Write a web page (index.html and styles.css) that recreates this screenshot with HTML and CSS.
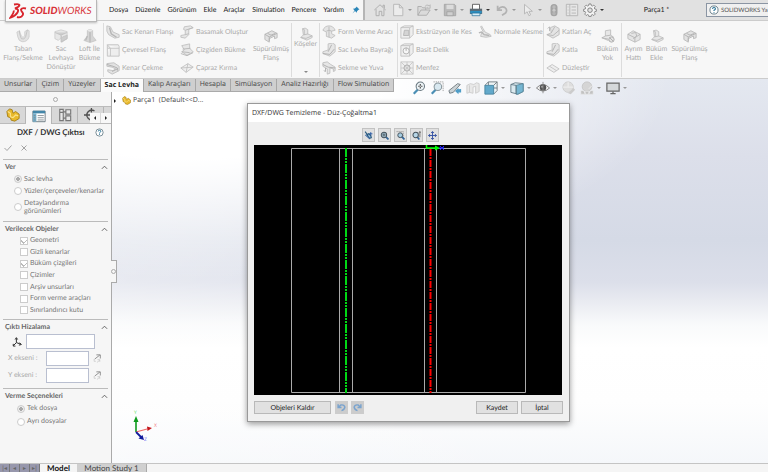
FILE: index.html
```
<!DOCTYPE html>
<html lang="tr">
<head>
<meta charset="utf-8">
<title>SOLIDWORKS - Parça1</title>
<link rel="stylesheet" href="styles.css">
</head>
<body>
<svg class="sprite" aria-hidden="true">
  <symbol id="i-home" viewBox="0 0 16 16"><path d="M1.500 8 8 2l6.500 6M3.500 7v7.500h3.500V9.500h3v5h2.500V7M11.500 4.500V2.500h1.500V6" fill="none" stroke="#a9a9a9"/></symbol>
  <symbol id="i-new" viewBox="0 0 16 16"><path d="M3 1.500h6.500l4 4v9H3zM9.500 1.500v4h4" fill="#ececec" stroke="#b5b5b5"/></symbol>
  <symbol id="i-open" viewBox="0 0 16 16"><path d="M1 14V4h4l1.500 1.500H10V8M1 14l3.500-6H15l-4 6z" fill="#dadada" stroke="#aaa"/><path d="M9 4q2-3 5-1l1-1v4h-4l1-1.500" fill="#ddd" stroke="#aaa" stroke-width=".8"/></symbol>
  <symbol id="i-save" viewBox="0 0 16 16"><path d="M1.500 1.500h11.500l1.500 1.500v11.500h-13z" fill="#b9b9b9" stroke="#a5a5a5"/><path d="M4 2h8v5H4z" fill="#dcdcdc"/><path d="M4.500 10h7v4.500h-7z" fill="#cfcfcf" stroke="#999" stroke-width=".7"/></symbol>
  <symbol id="i-print" viewBox="0 0 16 16"><path d="M4 7V1.500h8V7" fill="#fff" stroke="#555"/><path d="M1 6.500h14v6H1z" fill="#5e6a72"/><path d="M1.500 9h13v3h-13z" fill="#2d8fc0"/><path d="M3.500 11.500h9v3h-9z" fill="#d8eef8" stroke="#246d96" stroke-width=".8"/></symbol>
  <symbol id="i-undo" viewBox="0 0 16 16"><path d="M3 3v5h5M3.500 7.500Q7 3 11 5q4 3 1 6.500L8 14" fill="none" stroke="#b2b2b2" stroke-width="2"/></symbol>
  <symbol id="i-pointer" viewBox="0 0 16 16"><path d="M4 1.500v11l3-2.500 2 4.500 2-1-2-4h4z" fill="#ececec" stroke="#b3b3b3"/></symbol>
  <symbol id="i-traffic" viewBox="0 0 16 16"><rect x="4" y="1" width="8" height="14" rx="4" fill="#a3a3a3"/><circle cx="8" cy="4.500" r="2" fill="#bbb"/><circle cx="8" cy="8.200" r="1.800" fill="#c9c9c9"/><circle cx="8" cy="12" r="2" fill="#b5b5b5"/></symbol>
  <symbol id="i-list" viewBox="0 0 16 16"><path d="M1.500 1.500h13v13h-13zM5.500 1.500v13M7.500 4.500h5M7.500 8h5M7.500 11.500h5M3 4.500h1M3 8h1M3 11.500h1" fill="#e6e6e6" stroke="#b2b2b2"/></symbol>
  <symbol id="i-gear" viewBox="0 0 16 16"><path d="M6.700 1h2.600l.4 2 1.300.6 1.800-1.200 1.800 1.900-1.200 1.700.6 1.300 2 .4v2.500l-2 .4-.6 1.300 1.200 1.800-1.800 1.800-1.800-1.200-1.300.6-.4 2H6.700l-.4-2L5 14.300l-1.800 1.200-1.800-1.800 1.200-1.800L2 10.600l-2-.4V7.700l2-.4.6-1.300-1.200-1.700 1.800-1.900L5 3.600 6.300 3z" fill="#f4f4f4" stroke="#777" transform="translate(.7 .2) scale(.91)"/><circle cx="8" cy="8.200" r="2.600" fill="#e2e2e2" stroke="#777"/></symbol>
  <symbol id="i-help" viewBox="0 0 16 16"><circle cx="8" cy="8" r="6.500" fill="#fff" stroke="#5b7480" stroke-width="1.400"/><path d="M5.700 6.200q0-2.200 2.300-2.200t2.300 2q0 1.500-2.300 2.500v1.200M8 11v1.500" fill="none" stroke="#277296" stroke-width="1.700"/></symbol>
  <symbol id="i-pin" viewBox="0 0 16 16"><path d="M9 1l6 6-2 .5-3 3-.5 3L6 10 1 15l4-6-3-3.500L5.500 5l3-2.500z" fill="#2a86b8"/></symbol>

  <symbol id="r-base" viewBox="0 0 16 16"><path d="M1 3.500 4 2l2 6q2 3 4 0V3l3-2 2 1v7q-2 6-8 5.500Q3 14 2 9z" fill="#dedede" stroke="#bbb" stroke-width=".8"/><path d="M4 2v3l2 6q3 2 5-2l2-8" fill="none" stroke="#aaa" stroke-width=".8"/></symbol>
  <symbol id="r-convert" viewBox="0 0 16 16"><path d="M1 3 8 1l7 2v8l-6 4-1-5-3 3-4-2z" fill="#e4e4e4" stroke="#bbb" stroke-width=".8"/><path d="M1 4l7 3 7-3M8 7v8l7-4V7l-5 2" fill="#c4c4c4" stroke="#b0b0b0" stroke-width=".8"/></symbol>
  <symbol id="r-loft" viewBox="0 0 16 16"><path d="M5 2q3-2 6 0v6l4 5-7 2.500L1 13l4-5z" fill="#cdcdcd" stroke="#b5b5b5" stroke-width=".8"/><path d="M8 3v12M5 8l-2 5" stroke="#aaa" fill="none" stroke-width="1.500"/><ellipse cx="8" cy="2" rx="3" ry="1.300" fill="#eee" stroke="#bbb" stroke-width=".6"/></symbol>
  <symbol id="r-edge" viewBox="0 0 16 16"><path d="M1 1l4 1 3 6 7 3v3l-5 1-7-4-2-4z" fill="#e0e0e0" stroke="#b4b4b4"/><path d="M4 3l2 7 6 4" fill="none" stroke="#a5a5a5" stroke-width="1.600"/></symbol>
  <symbol id="r-miter" viewBox="0 0 16 16"><path d="M1.500 2h12.500l1 2v11H5V6H1.500zM1.500 6v9H5M1.500 2 5 6h10" fill="#ededed" stroke="#b4b4b4"/></symbol>
  <symbol id="r-hem" viewBox="0 0 16 16"><path d="M1 3l8-1 6 4v5l-8 4-5-3v-2l6 1 3-2-4-2-6-1z" fill="#dedede" stroke="#b0b0b0"/><path d="M1 4l7 2 5 2v3M7 12l6-3" fill="none" stroke="#999"/></symbol>
  <symbol id="r-jog" viewBox="0 0 16 16"><path d="M5 2l7-1 3 2-5 2v6l-4 4-5-1v-2l5-1V6L4 5z" fill="#e2e2e2" stroke="#b2b2b2"/><path d="M6 6l9-3M6 11l4-1" stroke="#a8a8a8" fill="none"/></symbol>
  <symbol id="r-sketch" viewBox="0 0 16 16"><path d="M2 3l9-2v5l4 4-7 4-6-4 3-2z" fill="#e2e2e2" stroke="#b2b2b2"/><path d="M3 7l9-1M2 10l9 1M1 12l7 2.500L15 11" stroke="#a5a5a5" fill="none"/></symbol>
  <symbol id="r-cross" viewBox="0 0 16 16"><path d="M1 8l8-5 6 4-8 6zM1 8l14-1M9 3 7 13" fill="#eee" stroke="#b4b4b4"/></symbol>
  <symbol id="r-swept" viewBox="0 0 16 16"><path d="M1 6l8-4 6 3v5l-3 1V8L6 11v4l-5-3z" fill="#ddd" stroke="#aaa"/><path d="M1 6l5 3 9-4M4 5l4 2 5-2M6 9v5" fill="none" stroke="#a0a0a0"/></symbol>
  <symbol id="r-corner" viewBox="0 0 16 16"><path d="M4 2q3-2 6 1v5l5 2v2l-6 3-7-3 3-3z" fill="#e3e3e3" stroke="#b4b4b4"/><path d="M5 9l5-1M2 12l6 1 7-3M4 2l2 1v6" fill="none" stroke="#aaa"/></symbol>
  <symbol id="r-form" viewBox="0 0 16 16"><path d="M1 6q2-5 7-5t7 5l-4 1v3l4 2-4 3-6-2V8z" fill="#e0e0e0" stroke="#b2b2b2"/><path d="M8 2v12M5 7q3-2 6 0" fill="none" stroke="#a8a8a8"/></symbol>
  <symbol id="r-gusset" viewBox="0 0 16 16"><path d="M7 1l5-1 3 2v8l-6 5-8-3v-2l6-2z" fill="#e2e2e2" stroke="#b2b2b2"/><path d="M7 10l4-8M1 12l8 1 5-6" fill="none" stroke="#999"/></symbol>
  <symbol id="r-tab" viewBox="0 0 16 16"><path d="M1 2l5-1 4 3 5 3v4l-2 1v-3L9 8v6l-3 1V9L1 6z" fill="#e2e2e2" stroke="#b0b0b0"/><path d="M1 4l6 3 8 1M4 8v4l-2-1" fill="none" stroke="#999"/></symbol>
  <symbol id="r-extrude" viewBox="0 0 16 16"><path d="M1 3l4-2h10v10l-4 4H1zM1 3h10v12M11 3l4-2" fill="#eee" stroke="#b2b2b2"/><path d="M5 6h5v6H4z" fill="#ccc" stroke="#a5a5a5"/></symbol>
  <symbol id="r-hole" viewBox="0 0 16 16"><path d="M1 3l4-2h10v10l-4 4H1zM1 3h10v12M11 3l4-2" fill="#eee" stroke="#b2b2b2"/><circle cx="7" cy="9" r="3.500" fill="#f8f8f8" stroke="#999"/><path d="M7 9V5.500" stroke="#999"/></symbol>
  <symbol id="r-vent" viewBox="0 0 16 16"><path d="M1 1h14v14H1zM1 8h14M8 1v14M1 1l14 14M15 1 1 15" fill="#eee" stroke="#bbb"/><circle cx="8" cy="8" r="3.500" fill="none" stroke="#999"/></symbol>
  <symbol id="r-normal" viewBox="0 0 16 16"><path d="M4 1l4 7 6 3 1 2-6 1-6-1 1-4 2-1-3-6z" fill="#e0e0e0" stroke="#b2b2b2"/><path d="M1 9l3-1 3 3 6 1" fill="none" stroke="#a5a5a5" stroke-width="1.500"/></symbol>
  <symbol id="r-unfold" viewBox="0 0 16 16"><path d="M5 3l5-2 5 3v7l-7 4-7-4 5-2z" fill="#e0e0e0" stroke="#b0b0b0"/><path d="M6 9l4-7M1 11l7 1 7-6M2 4l2-2v5" fill="none" stroke="#a5a5a5"/></symbol>
  <symbol id="r-flat" viewBox="0 0 16 16"><path d="M1 8l6-4 8 5-6 4zM4 6l8 5" fill="#ededed" stroke="#b5b5b5"/></symbol>
  <symbol id="r-nobend" viewBox="0 0 16 16"><path d="M5 2l6-1v6l3 2-6 4-7-3 4-2z" fill="#e4e4e4" stroke="#b0b0b0"/><path d="M5 8l6-1M1 10l7 1.500" fill="none" stroke="#a5a5a5"/><circle cx="12" cy="12" r="3" fill="#ddd" stroke="#999"/><path d="M10 10l4 4" stroke="#999"/></symbol>
  <symbol id="r-rip" viewBox="0 0 16 16"><path d="M1 6l6-4 8 4v6l-6 3-8-4z" fill="#e0e0e0" stroke="#b0b0b0"/><path d="M1 6l8 4 6-4M9 10v5M5 5l5-1 1 4-4 3" fill="none" stroke="#a5a5a5"/></symbol>

  <symbol id="v-fit" viewBox="0 0 16 16"><path d="M7 9.500 2 14.500" stroke="#4b8fb5" stroke-width="2.600"/><circle cx="9.500" cy="6" r="4.800" fill="#edf4f7" stroke="#6a7880" stroke-width="1.200"/><path d="M9.500 3.500v5M7 6h5" stroke="#555" stroke-width="1.400" stroke-dasharray="1.800 1.400" fill="none"/></symbol>
  <symbol id="v-area" viewBox="0 0 16 16"><path d="M4 1h11v11" stroke="#999" stroke-dasharray="1.500 1" fill="none"/><path d="M7 9.500 2 14.500" stroke="#4b8fb5" stroke-width="2.600"/><circle cx="9" cy="6.500" r="4.300" fill="#d8e8f0" stroke="#8a979d" stroke-width="1.200"/></symbol>
  <symbol id="v-prev" viewBox="0 0 16 16"><path d="M1 11 11 3l3 1-8 9-4 1z" fill="#ccd3d6" stroke="#6b767b"/><path d="M15 9v4h-3v2L8 11.500 12 8v1.500z" fill="#4f9dc7"/></symbol>
  <symbol id="v-section" viewBox="0 0 16 16"><path d="M1 5l4-2 4 1 3-2 3 1v9l-4 2v-8L8 7v7l-4-1-3 1zM4 5v8" fill="#e8e8e8" stroke="#ccc"/></symbol>
  <symbol id="v-orient" viewBox="0 0 16 16"><path d="M1 5l4-4h10v10l-4 4M5 1v4M15 1l-4 4M11 8h4" fill="#eef3f5" stroke="#6b767b"/><path d="M1 5h10v10H1z" fill="#62a9cb" stroke="#45829f"/></symbol>
  <symbol id="v-style" viewBox="0 0 16 16"><path d="M1 4l5-2 9 1v9l-6 3-8-2z" fill="#dceaf0" stroke="#607883"/><path d="M7 5l8-2v9l-6 3H7z" fill="#75b6d2" stroke="#54879d"/><path d="M1 4l6 1v10" fill="none" stroke="#607883"/></symbol>
  <symbol id="v-eye" viewBox="0 0 16 16"><path d="M.5 8Q8 0 15.500 8 8 15 .5 8z" fill="#f3f3f3" stroke="#777"/><circle cx="8" cy="7.500" r="3.700" fill="#555"/><circle cx="7" cy="6.500" r="1.200" fill="#aaa"/><path d="M8 1v13" stroke="#888"/></symbol>
  <symbol id="v-ball" viewBox="0 0 16 16"><circle cx="7" cy="7" r="6" fill="#dedede" stroke="#ccc"/><path d="M7 1v6H1M7 7l6 0" stroke="#f3f3f3" fill="none"/><path d="M13 8l2 2-5 5-3-1z" fill="#ccc"/></symbol>
  <symbol id="v-scene" viewBox="0 0 16 16"><circle cx="8" cy="6.500" r="5.500" fill="#d5d5d5" stroke="#c5c5c5"/><path d="M1 11h3l2 4H1zM10 15l2-4h3v4zM6 12h4v3H6z" fill="#c2c2c2" stroke="#eee" stroke-width=".6"/><path d="M10 9l4-4" stroke="#eee"/></symbol>
  <symbol id="v-screen" viewBox="0 0 16 16"><path d="M1 2.500h14v9H1z" fill="#d5d8da" stroke="#666" stroke-width="1.400"/><path d="M8 12v2.500M5 14.500h6" stroke="#666" stroke-width="1.500"/></symbol>

  <symbol id="p-part" viewBox="0 0 16 16"><path d="M1 4l3-3 3 1 1 4 3-2 4 3v5l-5 3-4-1-1-3-3-1z" fill="#e9b92b" stroke="#a27b12"/><path d="M2 4l3 2v4l3 1 3-3 3 1" fill="none" stroke="#fbe28b" stroke-width="1.300"/></symbol>
  <symbol id="p-props" viewBox="0 0 16 16"><path d="M1 2.500h14v12H1z" fill="#fff" stroke="#64727a"/><path d="M1 2h14v3H1z" fill="#4386a8"/><path d="M1 5h4v9.500H1z" fill="#74aeca"/><path d="M6.500 7.500h7M6.500 10h7M6.500 12.500h7M2 7.500h2M2 10h2M2 12.500h2" stroke="#7f8a90"/></symbol>
  <symbol id="p-config" viewBox="0 0 16 16"><path d="M2 1.500h4v13H2zM6 4.500h3M6 11.500h3M9 2h5.500v5H9zM9 9h5.500v5.500H9zM2 5h4" fill="#e8e8e8" stroke="#777" stroke-width="1.300"/></symbol>
  <symbol id="p-target" viewBox="0 0 16 16"><path d="M12 3.500A5.500 5.500 0 1 0 12 12.500M8.500 0v5M8.500 11v5M0 8h15" fill="none" stroke="#4f4f4f" stroke-width="1.500"/></symbol>
  <symbol id="p-axes" viewBox="0 0 16 16"><path d="M7 9V2M7 9l7 2.500M7 9l-5 5M5 4l2-3 2 3M12 9l3 3-4 1M2 11v3.500h3.500" fill="none" stroke="#333" stroke-width="1.600"/></symbol>
  <symbol id="p-flip" viewBox="0 0 16 16"><path d="M3 9l9-7M6 1.500h7V8" fill="none" stroke="#888" stroke-width="1.600"/><path d="M2 9v4h3M7 15l5-4M8 10h4v4" fill="none" stroke="#c4c4c4" stroke-width="1.200"/></symbol>
  <symbol id="p-up" viewBox="0 0 16 16"><path d="M2 11l6-6 6 6" fill="none" stroke="#555" stroke-width="2"/></symbol>
  <symbol id="p-ok" viewBox="0 0 16 16"><path d="M1 8l5 5 9-10" fill="none" stroke="#a3a3a3" stroke-width="2"/></symbol>
  <symbol id="p-cancel" viewBox="0 0 16 16"><path d="M3 3l10 10M13 3 3 13" fill="none" stroke="#a3a3a3" stroke-width="2"/></symbol>

  <symbol id="d-clean" viewBox="0 0 16 16"><path d="M2 1l5 7M5 7l5 6 3-1-1-4-4-3z" fill="#9ec4e0" stroke="#28597e" stroke-width="2"/><path d="M2 7l8 7M9 5h6M12 2v6" fill="none" stroke="#2456a0" stroke-width="1.600"/></symbol>
  <symbol id="d-zoom" viewBox="0 0 16 16"><path d="M10 10l5 5" stroke="#32669b" stroke-width="3"/><circle cx="7" cy="7" r="4.800" fill="#a9c6d6" stroke="#46535c" stroke-width="1.800"/><path d="M7 4v6M4 7h6" stroke="#46535c" stroke-width="1.500"/></symbol>
  <symbol id="d-area" viewBox="0 0 16 16"><path d="M1 1h12v12" stroke="#666" stroke-dasharray="2 1.500" fill="none"/><path d="M10 10l5 5" stroke="#32669b" stroke-width="3"/><circle cx="7.500" cy="7.500" r="4.300" fill="#a5cde3" stroke="#46535c" stroke-width="1.700"/></symbol>
  <symbol id="d-inout" viewBox="0 0 16 16"><path d="M9 10l4 5" stroke="#32669b" stroke-width="3"/><circle cx="6.500" cy="7" r="4.800" fill="#b6d5e6" stroke="#46535c" stroke-width="1.800"/><path d="M14 1v10M12.500 3 14 1l1.500 2" stroke="#444" fill="none" stroke-width="1.200"/></symbol>
  <symbol id="d-pan" viewBox="0 0 16 16"><path d="M8 1v14M1 8h14M5.500 3.500 8 1l2.500 2.500M5.500 12.500 8 15l2.500-2.500M3.500 5.500 1 8l2.500 2.500M12.500 5.500 15 8l-2.500 2.500" fill="none" stroke="#3553a4" stroke-width="1.700"/></symbol>
  <symbol id="d-undo" viewBox="0 0 16 16"><path d="M2 2v6h6M2.500 7.500 7 3.500q6-1 7 4-1 5-6 6" fill="none" stroke="#79a3ce" stroke-width="2.600"/></symbol>
</svg>

<div class="app">
  <header class="topbar">
    <div class="logo">
      <svg class="logo-mark" viewBox="0 0 18 16" aria-hidden="true"><path d="M5 1.500q5-1 5.500.5Q10 4 6 5.500q4.500.5 2.500 4Q6.500 13 1.500 14.500q4-5.500 3-7M17 5.500q-4-1-5 1 0 1.500 1.500 3 1.500 2-1 4-2 1.500-4.500.5" fill="none" stroke="#d8242c" stroke-width="1.900"/></svg>
      <span class="logo-text"><b>SOLID</b>WORKS</span>
    </div>
    <nav class="menu">
      <button>Dosya</button><button>Düzenle</button><button>Görünüm</button><button>Ekle</button><button>Araçlar</button><button>Simulation</button><button>Pencere</button><button>Yardım</button>
      <button class="pin" aria-label="Sabitle"><svg><use href="#i-pin"/></svg></button>
    </nav>
    <div class="quick">
      <button class="tool" aria-label="Ana sayfa"><svg><use href="#i-home"/></svg></button>
      <button class="tool drop" aria-label="Yeni"><svg><use href="#i-new"/></svg></button>
      <button class="tool drop" aria-label="Aç"><svg><use href="#i-open"/></svg></button>
      <button class="tool drop" aria-label="Kaydet"><svg><use href="#i-save"/></svg></button>
      <button class="tool drop dark" aria-label="Yazdır"><svg><use href="#i-print"/></svg></button>
      <button class="tool drop" aria-label="Geri al"><svg><use href="#i-undo"/></svg></button>
      <button class="tool drop" aria-label="Seç"><svg><use href="#i-pointer"/></svg></button>
      <button class="tool" aria-label="Yeniden oluştur"><svg><use href="#i-traffic"/></svg></button>
      <button class="tool" aria-label="Dosya özellikleri"><svg><use href="#i-list"/></svg></button>
      <button class="tool drop dark" aria-label="Seçenekler"><svg><use href="#i-gear"/></svg></button>
      <span class="doc">Parça1 *</span>
      <button class="search"><svg><use href="#i-help"/></svg><span>SOLIDWORKS Ya</span></button>
    </div>
  </header>

  <section class="ribbon">
    <button class="big" disabled><svg><use href="#r-base"/></svg>Taban<br>Flanş/Sekme</button>
    <button class="big" disabled><svg><use href="#r-convert"/></svg>Sac<br>Levhaya<br>Dönüştür</button>
    <button class="big" disabled><svg><use href="#r-loft"/></svg>Loft İle<br>Bükme</button>
    <div class="stack sep">
      <button disabled><svg><use href="#r-edge"/></svg>Sac Kenarı Flanşı</button>
      <button disabled><svg><use href="#r-miter"/></svg>Çevresel Flanş</button>
      <button disabled><svg><use href="#r-hem"/></svg>Kenar Çekme</button>
    </div>
    <div class="stack">
      <button disabled><svg><use href="#r-jog"/></svg>Basamak Oluştur</button>
      <button disabled><svg><use href="#r-sketch"/></svg>Çizgiden Bükme</button>
      <button disabled><svg><use href="#r-cross"/></svg>Çapraz Kırma</button>
    </div>
    <button class="big" disabled><svg><use href="#r-swept"/></svg>Süpürülmüş<br>Flanş</button>
    <button class="big sep menu-down" disabled><svg><use href="#r-corner"/></svg>Köşeler</button>
    <div class="stack sep">
      <button disabled><svg><use href="#r-form"/></svg>Form Verme Aracı</button>
      <button disabled><svg><use href="#r-gusset"/></svg>Sac Levha Bayrağı</button>
      <button disabled><svg><use href="#r-tab"/></svg>Sekme ve Yuva</button>
    </div>
    <div class="stack sep">
      <button disabled><svg><use href="#r-extrude"/></svg>Ekstrüzyon ile Kes</button>
      <button disabled><svg><use href="#r-hole"/></svg>Basit Delik</button>
      <button disabled><svg><use href="#r-vent"/></svg>Menfez</button>
    </div>
    <div class="stack">
      <button disabled><svg><use href="#r-normal"/></svg>Normale Kesme</button>
    </div>
    <div class="stack sep">
      <button disabled><svg><use href="#r-unfold"/></svg>Katları Aç</button>
      <button disabled><svg><use href="#r-gusset"/></svg>Katla</button>
      <button disabled><svg><use href="#r-flat"/></svg>Düzleştir</button>
    </div>
    <button class="big" disabled><svg><use href="#r-nobend"/></svg>Büküm<br>Yok</button>
    <button class="big sep" disabled><svg><use href="#r-rip"/></svg>Ayrım<br>Hattı</button>
    <button class="big" disabled><svg><use href="#r-corner"/></svg>Büküm<br>Ekle</button>
    <button class="big" disabled><svg><use href="#r-swept"/></svg>Süpürülmüş<br>Flanş</button>
  </section>

  <main class="work">
    <nav class="tabs">
      <button>Unsurlar</button><button>Çizim</button><button>Yüzeyler</button><button class="active">Sac Levha</button><button>Kalıp Araçları</button><button>Hesapla</button><button>Simülasyon</button><button>Analiz Hazırlığı</button><button>Flow Simulation</button>
    </nav>
    <div class="view-tools">
      <button class="tool" aria-label="Ekrana sığdır"><svg><use href="#v-fit"/></svg></button>
      <button class="tool" aria-label="Alana yakınlaştır"><svg><use href="#v-area"/></svg></button>
      <button class="tool" aria-label="Önceki görünüm"><svg><use href="#v-prev"/></svg></button>
      <button class="tool" aria-label="Kesit görünümü"><svg><use href="#v-section"/></svg></button>
      <button class="tool drop" aria-label="Görünüm yönü"><svg><use href="#v-orient"/></svg></button>
      <button class="tool drop" aria-label="Görüntü stili"><svg><use href="#v-style"/></svg></button>
      <button class="tool drop" aria-label="Gizle/göster"><svg><use href="#v-eye"/></svg></button>
      <button class="tool" aria-label="Görünümü düzenle"><svg><use href="#v-ball"/></svg></button>
      <button class="tool drop" aria-label="Sahne uygula"><svg><use href="#v-scene"/></svg></button>
      <button class="tool drop" aria-label="Görünüm ayarları"><svg><use href="#v-screen"/></svg></button>
    </div>

    <aside class="panel">
      <div class="grip"></div>
      <div class="panel-tabs">
        <button aria-label="Tasarım ağacı"><svg><use href="#p-part"/></svg></button>
        <button class="active" aria-label="Özellikler"><svg><use href="#p-props"/></svg></button>
        <button aria-label="Konfigürasyonlar"><svg><use href="#p-config"/></svg></button>
        <button aria-label="Ölçülendirme"><svg><use href="#p-target"/></svg></button>
        <span class="pager"><button class="prev" aria-label="Önceki"></button><button class="next" aria-label="Sonraki"></button></span>
      </div>
      <h1>DXF / DWG Çıktısı<button aria-label="Yardım"><svg><use href="#i-help"/></svg></button></h1>
      <div class="confirm">
        <button aria-label="Tamam"><svg><use href="#p-ok"/></svg></button>
        <button aria-label="İptal et"><svg><use href="#p-cancel"/></svg></button>
      </div>
      <section class="group">
        <h2>Ver<svg><use href="#p-up"/></svg></h2>
        <div class="radios">
          <label><input type="radio" name="ver" checked disabled>Sac levha</label>
          <label><input type="radio" name="ver" disabled>Yüzler/çerçeveler/kenarlar</label>
          <label class="tall"><input type="radio" name="ver" disabled><span>Detaylandırma<br>görünümleri</span></label>
        </div>
      </section>
      <section class="group">
        <h2>Verilecek Objeler<svg><use href="#p-up"/></svg></h2>
        <div class="checks">
          <label><input type="checkbox" checked disabled>Geometri</label>
          <label><input type="checkbox" disabled>Gizli kenarlar</label>
          <label><input type="checkbox" checked disabled>Büküm çizgileri</label>
          <label><input type="checkbox" disabled>Çizimler</label>
          <label><input type="checkbox" disabled>Arşiv unsurları</label>
          <label><input type="checkbox" disabled>Form verme araçları</label>
          <label><input type="checkbox" disabled>Sınırlandırıcı kutu</label>
        </div>
      </section>
      <section class="group">
        <h2>Çıktı Hizalama<svg><use href="#p-up"/></svg></h2>
        <div class="fields">
          <label class="origin"><svg><use href="#p-axes"/></svg><input type="text" aria-label="Çıktı orijini"></label>
          <div class="axis"><label for="ax">X ekseni :</label><input id="ax" type="text"><button aria-label="X yönünü çevir"><svg><use href="#p-flip"/></svg></button></div>
          <div class="axis"><label for="ay">Y ekseni :</label><input id="ay" type="text"><button aria-label="Y yönünü çevir"><svg><use href="#p-flip"/></svg></button></div>
        </div>
      </section>
      <section class="group">
        <h2>Verme Seçenekleri<svg><use href="#p-up"/></svg></h2>
        <div class="radios wide">
          <label><input type="radio" name="dosya" checked disabled>Tek dosya</label>
          <label><input type="radio" name="dosya" disabled>Ayrı dosyalar</label>
        </div>
      </section>
      <button class="handle" aria-label="Paneli daralt"></button>
    </aside>

    <div class="viewport">
      <div class="tree"><svg><use href="#p-part"/></svg>Parça1 &nbsp;(Default&lt;&lt;D...</div>
      <svg class="triad" viewBox="0 0 32 36" aria-hidden="true">
        <path d="M9 24V12" stroke="#0c9a1c" stroke-width="1.600"/><path d="M6.500 14 9 8l2.500 6z" fill="#0c9a1c"/>
        <path d="M9 24l11-3" stroke="#e66" stroke-width="1.200"/><path d="M20 18.500l5 1.500-4.500 3z" fill="#c4161c"/>
        <path d="M9 24l6 6" stroke="#111a9c" stroke-width="1.800"/><path d="M15.500 27l1.500 5-5.500-1.500z" fill="#111a9c"/>
        <text x="7" y="6" fill="#5fe05f">Y</text><text x="27" y="19" fill="#f08080">X</text><text x="17" y="33" fill="#5a5af0">Z</text>
      </svg>
    </div>

    <section class="dialog" role="dialog" aria-labelledby="dlg">
      <h2 id="dlg">DXF/DWG Temizleme - Düz-Çoğaltma1</h2>
      <div class="dialog-tools">
        <button aria-label="Temizle"><svg><use href="#d-clean"/></svg></button>
        <button aria-label="Sığdır"><svg><use href="#d-zoom"/></svg></button>
        <button aria-label="Alana yakınlaştır"><svg><use href="#d-area"/></svg></button>
        <button aria-label="Yakınlaştır"><svg><use href="#d-inout"/></svg></button>
        <button aria-label="Kaydır"><svg><use href="#d-pan"/></svg></button>
      </div>
      <svg class="drawing" viewBox="0 0 308 250" role="img" aria-label="Açınım">
        <path d="M37.500 3.500h234v244h-234zM85.500 3.500v244M98.500 3.500v244M170.500 3.500v244M182.500 3.500v244" fill="none" stroke="#aaa"/>
        <path d="M92 3v245" stroke="#00d814" stroke-width="2" stroke-dasharray="9 1 2 1 2 1"/>
        <path d="M176.500 4v244" stroke="#ff0000" stroke-width="2" stroke-dasharray="7 1 2 1"/>
        <path d="M172.500 0v3H182" fill="none" stroke="#0f0" stroke-width="1.500"/><path d="M181 .5l5 2.500-5 2.500z" fill="#0f0"/>
        <path d="M186 1l4 4M190 1l-4 4M185 3h5" stroke="#22f"/>
      </svg>
      <div class="dialog-foot">
        <button class="wide">Objeleri Kaldır</button>
        <button class="square" aria-label="Geri al"><svg><use href="#d-undo"/></svg></button>
        <button class="square redo" aria-label="Yinele"><svg><use href="#d-undo"/></svg></button>
        <button class="end">Kaydet</button>
        <button class="last">İptal</button>
      </div>
    </section>
  </main>

  <footer class="bottom">
    <div class="nav-buttons"><button aria-label="İlk">|◂</button><button aria-label="Önceki">◂</button><button aria-label="Sonraki">▸</button><button aria-label="Son">▸|</button></div>
    <button class="model">Model</button>
    <button class="motion">Motion Study 1</button>
  </footer>
</div>
</body>
</html>
```
FILE: styles.css
```
* { box-sizing: border-box; margin: 0; padding: 0; }
body {
  height: 100vh;
  overflow: hidden;
  font: 7px/9px Lato, "Open Sans", sans-serif;
  text-rendering: geometricPrecision;
  color: #444;
  background: #f5f5f5;
}
button, input { font: inherit; color: inherit; border: 0; background: none; text-rendering: inherit; }
button { white-space: nowrap; }
svg { display: block; flex: none; width: 14px; height: 14px; }
.sprite { position: absolute; width: 0; height: 0; }
.app { display: grid; grid-template-rows: 21px 57px 1fr 8px; height: 100%; }

/* top bar */
.topbar { display: flex; min-width: 0; border-bottom: 1px solid #ccc; background: #f6f6f6; }
.logo {
  display: flex; align-items: center; gap: 3px;
  flex: none; width: 92px; height: 22px; margin-left: 5px; padding-left: 3px;
  background: #f9f9f9; border: 1px solid #b8b8b8; border-top: 0;
  box-shadow: 0 1px 2px #bbb; position: relative; z-index: 1;
}
.logo-mark { width: 18px; height: 16px; }
.logo-text { font: italic 10px/12px Lato, sans-serif; color: #d8343a; }
.logo-text b { font-weight: 900; }
.menu { display: flex; align-items: center; gap: 7px; flex: none; width: 266px; padding-left: 12px; color: #222; }
.pin { margin-left: auto; margin-right: 3px; }
.pin svg { width: 8px; height: 8px; }
.quick { display: flex; align-items: center; flex: 1; min-width: 0; padding-left: 6px; background: #e1e1e1; border-left: 2px solid #b5b5b5; }
.tool { display: flex; align-items: center; flex: none; padding: 0 2px; }
.drop { padding-right: 0; gap: 3px; width: 26px; }
.drop::after { content: ""; border: 2px solid transparent; border-top-color: #999; border-bottom: 0; }
.dark::after { border-top-color: #333; }
.doc { margin: 0 auto; color: #222; }
.search { display: flex; align-items: center; gap: 2px; flex: none; width: 62px; height: 14px; padding-left: 2px; font-size: 6px; background: #f0f0f0; border: 1px solid #8b95a3; border-right: 0; color: #555; }
.search svg { width: 10px; height: 10px; }

/* ribbon */
.ribbon {
  display: grid;
  grid-template-columns: 46px 30px 27px 75px 73px 40px 28px 78px 79px 67px 51px 27px 24px 23px 43px;
  padding: 2px 0 1px;
  background: #f7f7f7;
  color: #aaa;
}
.big { display: flex; flex-direction: column; align-items: center; padding-top: 6px; line-height: 9px; text-align: center; }
.big svg { margin-bottom: 2px; opacity: .8; }
.big.menu-down svg { margin-bottom: -1px; margin-top: -2px; }
.menu-down::after { content: ""; margin: auto 0 4px; border: 2px solid transparent; border-top-color: #888; border-bottom: 0; }
.sep { border-left: 1px solid #dcdcdc; }
.stack { display: grid; grid-template-rows: repeat(3, 18px); padding-left: 2px; }
.stack button { display: flex; align-items: center; gap: 2px; }
.stack svg { opacity: .8; }

/* work area */
.work {
  position: relative;
  display: grid; grid-template: 13px 1fr / 112px 1fr;
  min-height: 0;
  border-top: 1px solid #ccc; border-bottom: 1px solid #c4c4c4;
  background:
    radial-gradient(ellipse 480px 200px at 190px 0, #fff 40%, #fff0),
    linear-gradient(90deg, #fff7, #fff0 70%),
    linear-gradient(#e4e8f0, #dcdfea 20%, #d5dae6 42%, #dcdfea 53%, #e9ebf1 58%, #f9fafb 64%, #fff 70%, #fefefe 84%, #f5f7fa);
}
.tabs { grid-column: 1 / 3; display: flex; color: #444; font-family: "Open Sans", sans-serif; }
.tabs button { padding: 0 4px; line-height: 12px; background: #cfcfcf; border-right: 1px solid #a8a8a8; border-bottom: 1px solid #aaa; }
.tabs .active { background: #fafafa; border-bottom: 0; font-weight: 700; color: #222; }
.view-tools { position: absolute; top: 2px; left: 410px; display: flex; }

/* left panel */
.panel { position: relative; min-height: 0; background: #f6f6f6; border-right: 1px solid #aaa; color: #777; }
.grip { height: 14px; padding-top: 5px; }
.grip::before, .handle::before { content: ""; display: block; width: 3px; height: 3px; margin: auto; border: 1px solid #aaa; border-radius: 50%; }
.panel-tabs { display: flex; height: 18px; position: relative; background: #d8d8d8; border-top: 1px solid #bbb; border-bottom: 1px solid #bbb; }
.panel-tabs > button { display: grid; place-items: center; width: 26px; border-right: 1px solid #b5b5b5; }
.panel-tabs .active { background: #f6f6f6; height: 17px; }
.pager { position: absolute; right: 0; bottom: 0; display: flex; gap: 1px; }
.pager button { display: grid; place-items: center; width: 10px; height: 10px; background: #f8f8f8; }
.pager button::before { content: ""; border: 2px solid transparent; }
.pager .prev::before { border-right-color: #222; border-left: 0; }
.pager .next::before { border-left-color: #222; border-right: 0; }
h1 { display: flex; align-items: center; justify-content: space-between; height: 16px; padding: 0 7px 0 17px; font-size: 8px; color: #333; }
h1 svg { width: 9px; height: 9px; }
.confirm { display: flex; gap: 8px; padding: 4px 0 7px 4px; }
.confirm svg { width: 8px; height: 8px; }
.group { margin: 0 3px; border-top: 1px solid #bbb; }
h2 { display: flex; justify-content: space-between; align-items: center; padding: 3px 0 0 2px; font-size: 7px; line-height: 9px; color: #666; }
.group h2 svg { width: 7px; height: 7px; }
.group label { display: flex; align-items: center; gap: 2px; white-space: nowrap; }
.radios { padding: 1px 0 4px 11px; }
.radios label { height: 12px; }
.radios .tall { height: 20px; line-height: 8px; }
.wide.radios { padding-left: 14px; }
.wide.radios label { height: 13px; }
.checks { display: grid; min-height: 85px; padding: 1px 0 3px 17px; }
input[type=radio], input[type=checkbox] { appearance: none; flex: none; width: 8px; height: 8px; border: 1px solid #ccc; background: #fff; }
input[type=radio] { border-radius: 50%; }
input[type=radio]:checked { background: radial-gradient(circle, #aaa 38%, #eee 50%); }
input[type=checkbox]:checked { background: linear-gradient(-50deg, #0000 45%, #bbb 45% 58%, #0000 58%) 3px 0 / 4px 6px no-repeat, linear-gradient(45deg, #0000 40%, #bbb 40% 60%, #0000 60%) 0 2px / 3px 4px no-repeat, #fff; }
.fields { display: grid; gap: 2px; padding: 2px 0 5px; }
.fields input { height: 15px; background: #fff; border: 1px solid #b9bfd0; }
.origin { padding-left: 9px; }
.origin svg { width: 10px; height: 10px; }
.origin input { width: 69px; margin-left: 2px; }
.axis { display: grid; grid-template-columns: 38px 43px 14px; align-items: center; padding-left: 5px; color: #aaa; }
.axis svg { width: 9px; height: 9px; margin-left: 4px; }
.handle { position: absolute; right: -6px; top: 168px; width: 6px; height: 23px; background: #f6f6f6; border: 1px solid #aaa; border-left: 0; }

/* graphics area */
.viewport { position: relative; min-width: 0; }
.tree { display: flex; align-items: center; gap: 2px; padding: 4px 2px; font-family: "Open Sans", sans-serif; }
.tree svg { width: 9px; height: 9px; }
.tree::before { content: ""; margin-right: 4px; border: 2px solid transparent; border-left-color: #222; border-right: 0; }
.triad { position: absolute; left: 15px; bottom: 19px; width: 32px; height: 36px; overflow: visible; }
.triad text { font: 5px "Open Sans", sans-serif; }

/* dialog window */
.dialog { position: absolute; left: 247px; top: 24px; width: 323px; padding-bottom: 7px; background: #f0f0f0; border: 1px solid #999; box-shadow: 0 2px 6px #0006; }
.dialog h2 { height: 18px; padding: 0 4px; background: #fff; font-family: "Open Sans", sans-serif; font-weight: 400; color: #333; }
.dialog-tools { display: flex; justify-content: center; gap: 3px; padding: 6px 17px 3px 0; }
.dialog-tools button { display: grid; place-items: center; width: 13px; height: 14px; background: #e0e0e0; border: 1px solid #c2c2c2; }
.dialog-tools svg { width: 9px; height: 9px; }
.drawing { width: 308px; height: 250px; margin: 0 6px; background: #000; }
.dialog-foot { display: flex; gap: 3px; padding: 6px 6px 0; color: #222; }
.dialog-foot button { width: 42px; height: 13px; line-height: 10px; background: #e1e1e1; border: 1px solid #b9b9b9; }
.dialog-foot .wide { width: 77px; margin-right: 1px; }
.dialog-foot .square { display: grid; place-items: center; width: 13px; background: #ccc; border: 0; }
.square svg { width: 9px; height: 9px; }
.redo svg { transform: scaleX(-1); }
.dialog-foot .end { margin-left: auto; }

/* bottom tabs */
.bottom { display: flex; min-width: 0; overflow: hidden; font-size: 8px; line-height: 9px; background: #f5f5f5; }
.bottom button { height: 9px; }
.nav-buttons { display: flex; width: 40px; background: #9797ac; }
.nav-buttons button { flex: 1; border-right: 1px solid #777; font: 6px/8px "DejaVu Sans", sans-serif; color: #666; }
.model { width: 37px; font-weight: 700; color: #111; }
.motion { width: 70px; background: #d0d0d0; border-right: 1px solid #aaa; }
```
